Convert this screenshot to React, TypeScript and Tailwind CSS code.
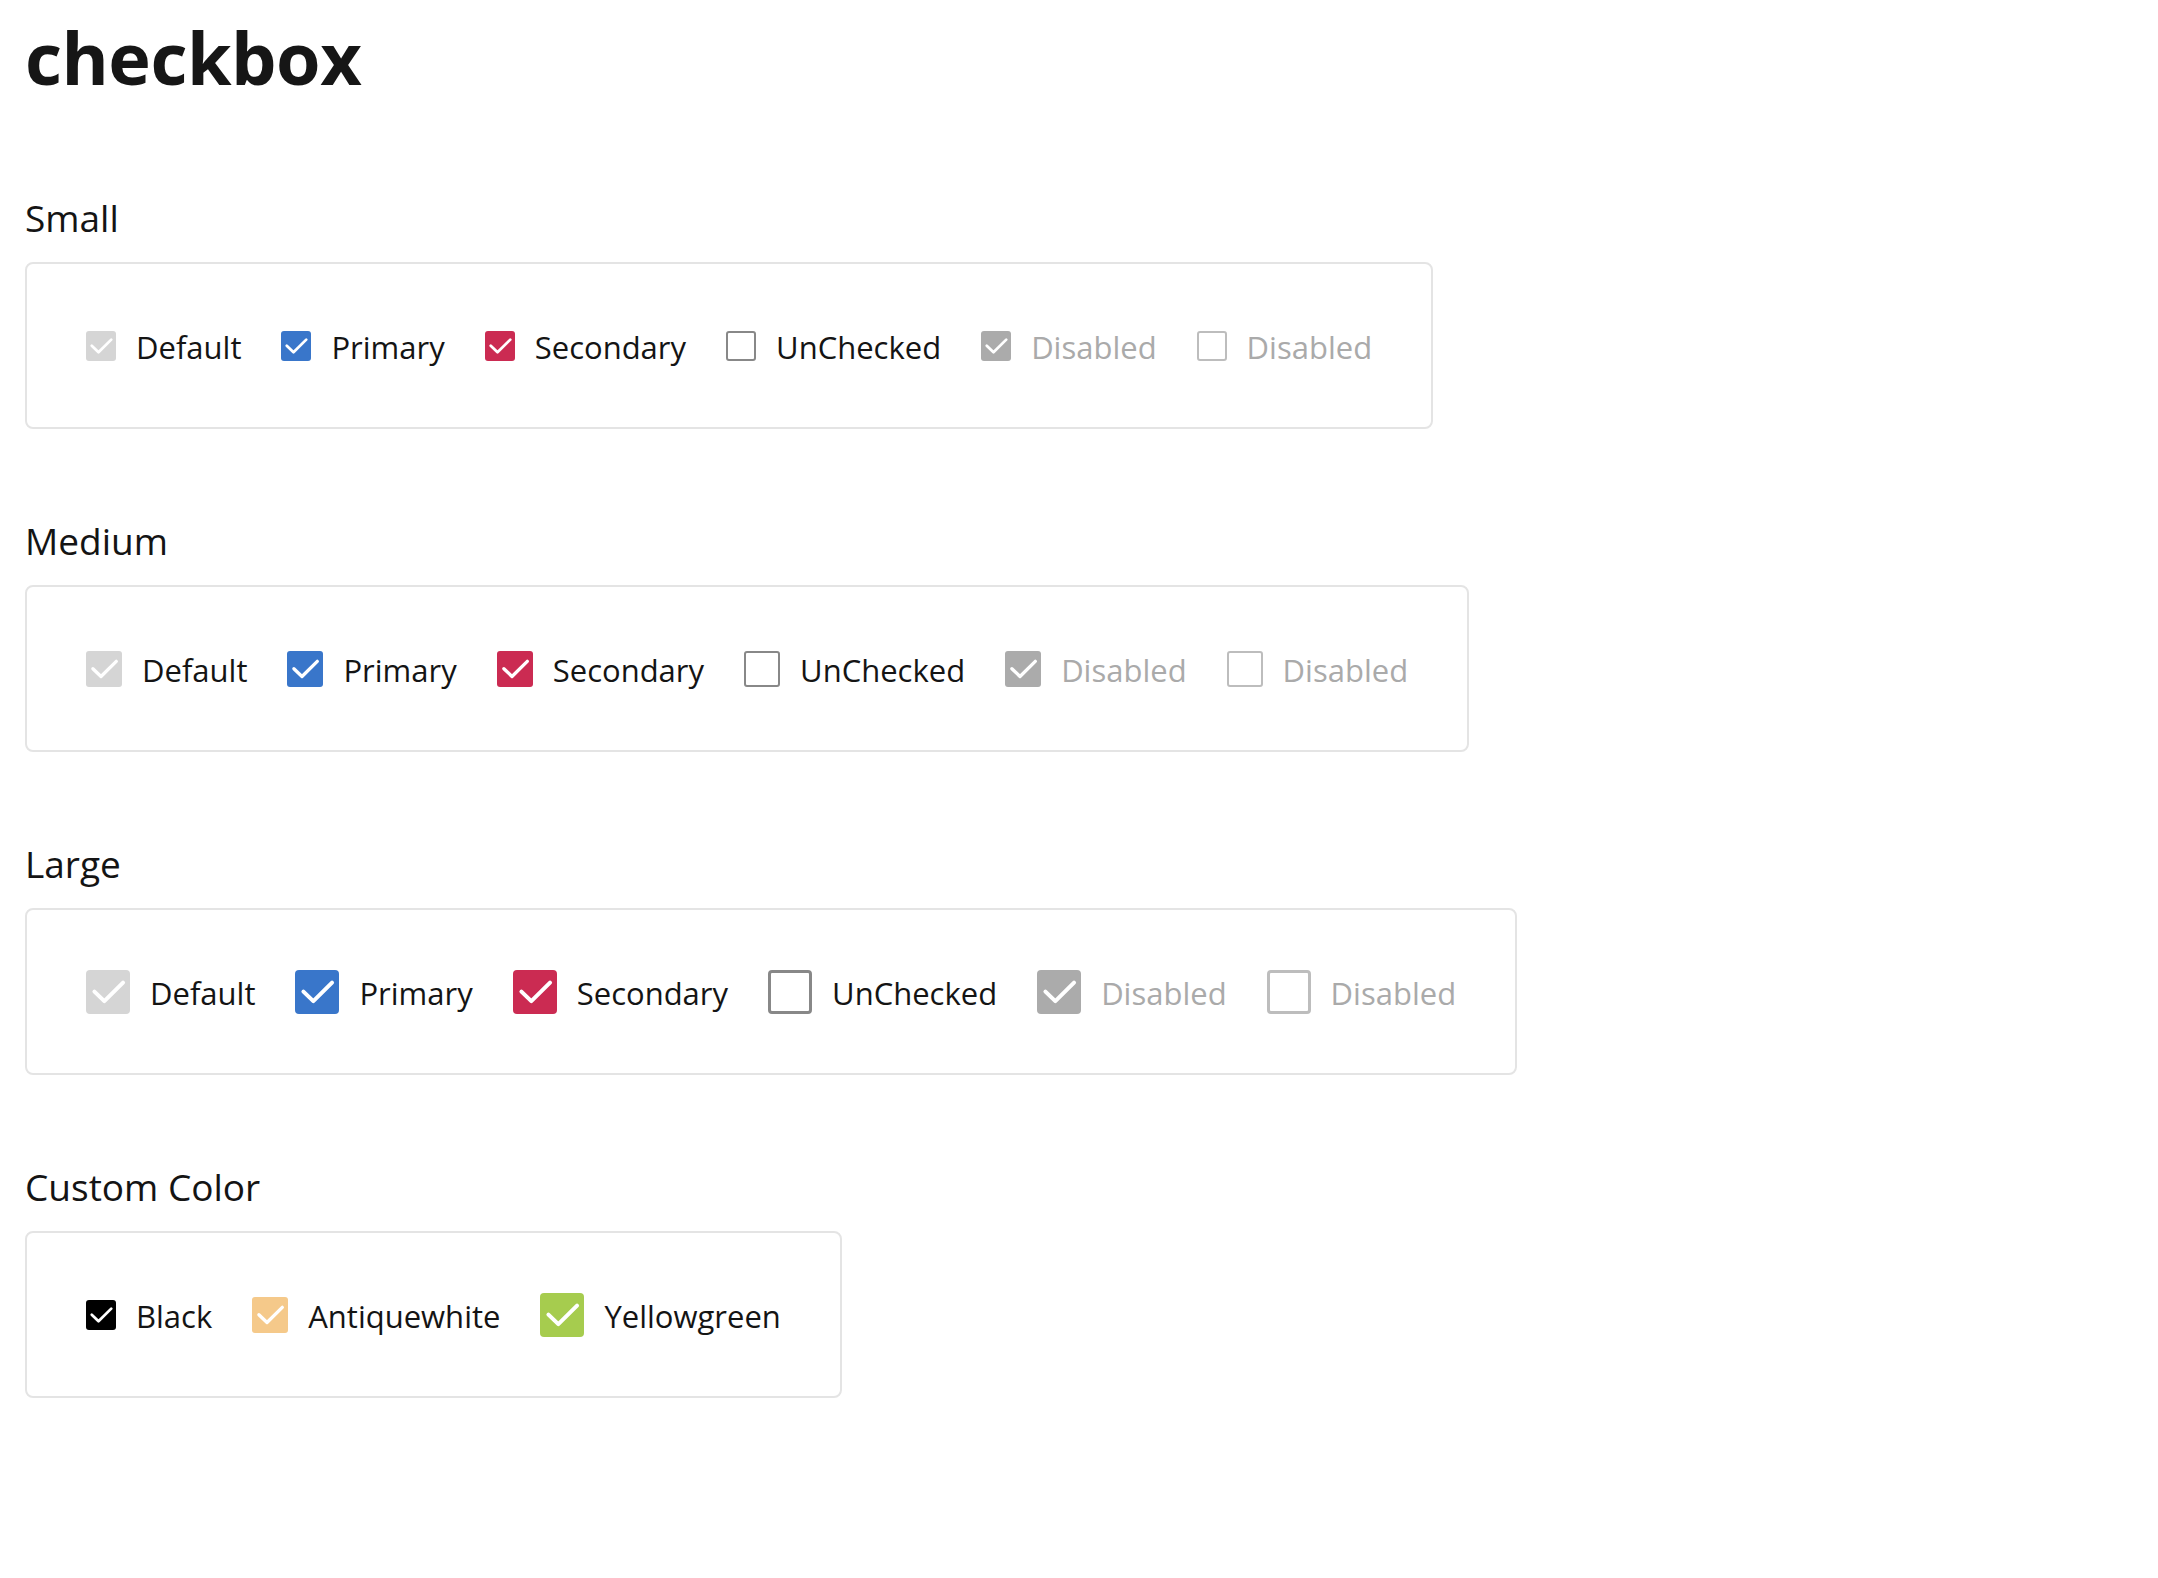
import React from 'react';

type Size = 'sm' | 'md' | 'lg';

const boxSize: Record<Size, string> = {
  sm: 'w-[30px] h-[30px] rounded-[3px]',
  md: 'w-[36px] h-[36px] rounded-[3px]',
  lg: 'w-[44px] h-[44px] rounded-[4px]',
};

const borderSize: Record<Size, string> = {
  sm: 'border-2',
  md: 'border-2',
  lg: 'border-[3px]',
};

type Item = {
  label: string;
  checked: boolean;
  fill?: string;
  border?: string;
  disabled?: boolean;
  size?: Size;
};

const Check = () => (
  <svg viewBox="0 0 24 24" className="w-full h-full" fill="none">
    <path d="M4.6 11.8 L10 17 L20.2 6.9" stroke="white" strokeWidth="2.2" strokeLinecap="round" strokeLinejoin="round" />
  </svg>
);

const CheckItem = ({ label, checked, fill, border, disabled, size = 'sm' }: Item) => (
  <label className="flex items-center gap-[20px] cursor-pointer">
    {checked ? (
      <span className={`flex shrink-0 ${boxSize[size]} ${fill}`}>
        <Check />
      </span>
    ) : (
      <span className={`block shrink-0 bg-white ${boxSize[size]} ${borderSize[size]} ${border}`} />
    )}
    <span className={`text-[31px] leading-none pt-[3px] ${disabled ? 'text-[#aaaaaa]' : 'text-[#141414]'}`}>{label}</span>
  </label>
);

const baseItems = (size: Size): Item[] => [
  { label: 'Default', checked: true, fill: 'bg-[#d5d5d5]', size },
  { label: 'Primary', checked: true, fill: 'bg-[#3976ca]', size },
  { label: 'Secondary', checked: true, fill: 'bg-[#cb2b52]', size },
  { label: 'UnChecked', checked: false, border: 'border-[#888888]', size },
  { label: 'Disabled', checked: true, fill: 'bg-[#ababab]', disabled: true, size },
  { label: 'Disabled', checked: false, border: 'border-[#bdbdbd]', disabled: true, size },
];

const customItems: Item[] = [
  { label: 'Black', checked: true, fill: 'bg-black', size: 'sm' },
  { label: 'Antiquewhite', checked: true, fill: 'bg-[#f5c98a]', size: 'md' },
  { label: 'Yellowgreen', checked: true, fill: 'bg-[#a6cc4e]', size: 'lg' },
];

const Section = ({ title, items }: { title: string; items: Item[] }) => (
  <section className="flex flex-col items-start">
    <h2 className="text-[37px] leading-none text-[#141414] mb-[26px]">{title}</h2>
    <div className="flex items-center gap-[40px] h-[167px] px-[59px] border-2 border-[#e4e4e4] rounded-[8px] bg-white">
      {items.map((item, i) => (
        <CheckItem key={i} {...item} />
      ))}
    </div>
  </section>
);

export default function App() {
  return (
    <div className="min-h-screen bg-white pl-[25px] pt-[21px] pb-[120px]" style={{ fontFamily: '"Open Sans", "Noto Sans", sans-serif' }}>
      <h1 className="text-[72px] leading-none font-bold text-[#161616] tracking-[-0.5px]">checkbox</h1>
      <div className="flex flex-col gap-[93px] mt-[106px]">
        <Section title="Small" items={baseItems('sm')} />
        <Section title="Medium" items={baseItems('md')} />
        <Section title="Large" items={baseItems('lg')} />
        <Section title="Custom Color" items={customItems} />
      </div>
    </div>
  );
}
